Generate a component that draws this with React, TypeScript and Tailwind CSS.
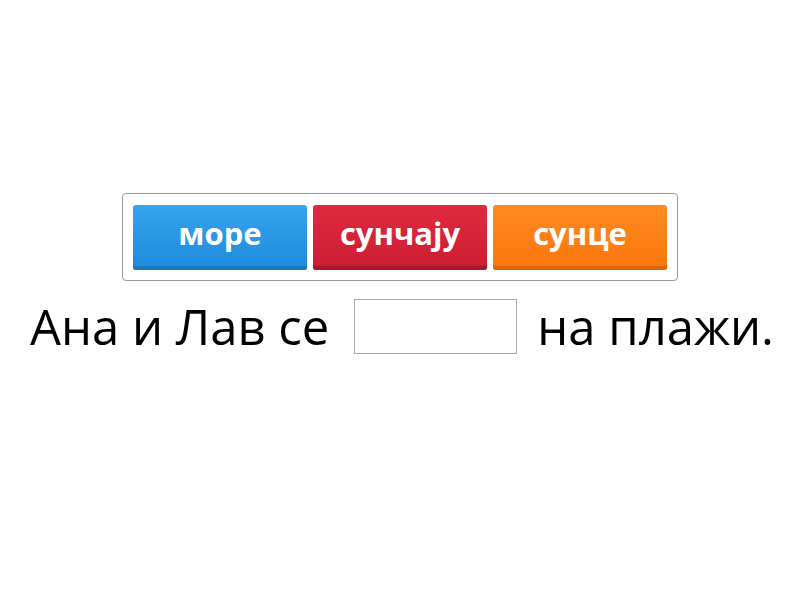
export default function App() {
  const words = [
    { text: "море", cls: "bg-linear-to-b from-[#35a3ee] to-[#1d8bdc] shadow-[inset_0_-4px_0_#1878c2]" },
    { text: "сунчају", cls: "bg-linear-to-b from-[#e0293f] to-[#cc1d33] shadow-[inset_0_-4px_0_#ab1729]" },
    { text: "сунце", cls: "bg-linear-to-b from-[#ff8a20] to-[#fb760a] shadow-[inset_0_-4px_0_#dc6504]" },
  ];

  return (
    <div className="w-[800px] h-[600px] bg-white flex flex-col items-center pt-[193px] font-['Open_Sans',sans-serif]">
      {/* word bank */}
      <div className="w-[556px] h-[88px] border border-[#9a9a9a] rounded-[4px] flex gap-[6px] pl-[10px] pt-[11px]">
        {words.map((w) => (
          <div
            key={w.text}
            className={`w-[174px] h-[65px] rounded-[3px] flex items-center justify-center text-white font-bold text-[31px] pb-[8px] ${w.cls}`}
          >
            {w.text}
          </div>
        ))}
      </div>

      {/* sentence */}
      <div className="flex items-center mt-[18px] text-[49px] text-black leading-none">
        <span className="ml-[4px]">Ана и Лав се</span>
        <div className="w-[163px] h-[55px] border border-[#aaaaaa] ml-[25px] mr-[20px]"></div>
        <span>на плажи.</span>
      </div>
    </div>
  );
}
